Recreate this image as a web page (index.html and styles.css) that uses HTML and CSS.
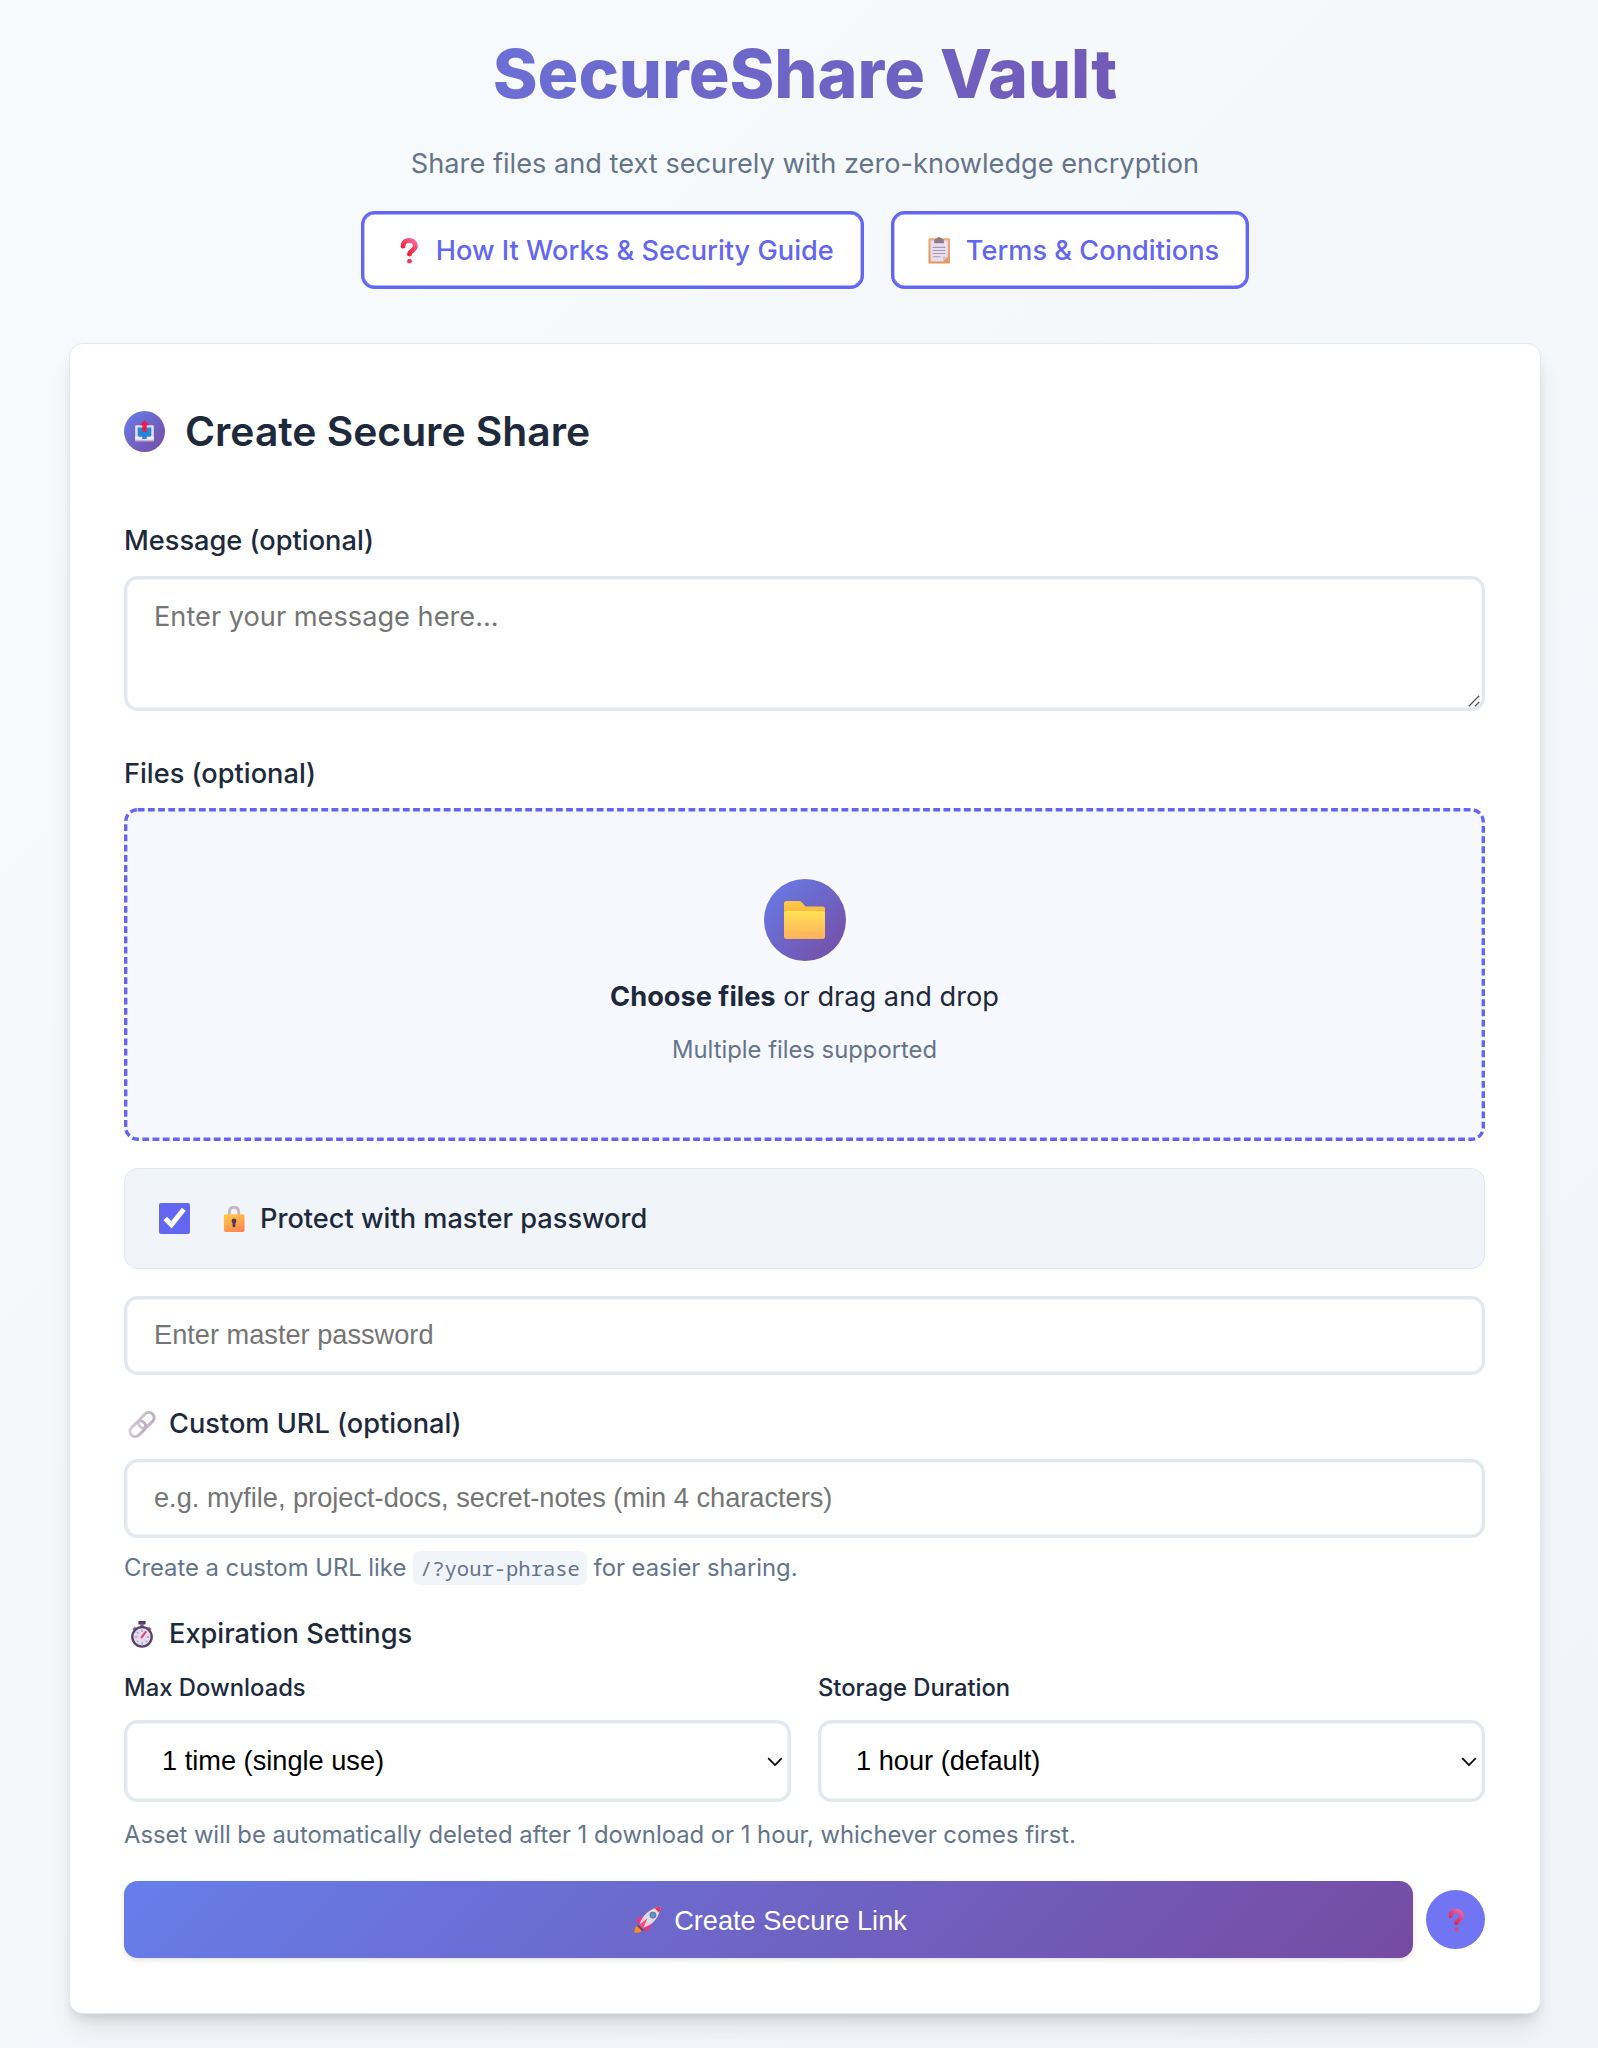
FILE: index.html
```html
<!DOCTYPE html>
<html lang="en">
<head>
<meta charset="utf-8">
<title>SecureShare Vault</title>
<link rel="stylesheet" href="styles.css">
</head>
<body>
<svg class="defs" aria-hidden="true">
  <defs>
    <linearGradient id="g-red" x1="1" y1="0" x2="0.3" y2="1"><stop offset="0" stop-color="#ff6aa0"/><stop offset=".5" stop-color="#f43d64"/><stop offset="1" stop-color="#ea1d36"/></linearGradient>
    <linearGradient id="g-folder" x1="0" y1="0" x2="0" y2="1"><stop offset="0" stop-color="#ffe152"/><stop offset="1" stop-color="#ffb05f"/></linearGradient>
    <linearGradient id="g-tab" x1="0" y1="0" x2="0" y2="1"><stop offset="0" stop-color="#ffcb4b"/><stop offset="1" stop-color="#f9a930"/></linearGradient>
    <linearGradient id="g-lock" x1="0.2" y1="0" x2="0.7" y2="1"><stop offset="0" stop-color="#ffc748"/><stop offset="1" stop-color="#ff8552"/></linearGradient>
    <linearGradient id="g-wood" x1="0" y1="0" x2="0" y2="1"><stop offset="0" stop-color="#f0aa70"/><stop offset="1" stop-color="#e29658"/></linearGradient>
    <linearGradient id="g-link" x1="0" y1="0" x2="1" y2="1"><stop offset="0" stop-color="#d8cedb"/><stop offset="1" stop-color="#b7a9bd"/></linearGradient>
  </defs>
  <symbol id="i-question" viewBox="0 0 32 32">
    <path d="M9 10.800C9.200 6.500 12 4 16.300 4s7.200 2.700 7.200 6.800c0 5-6.500 5-6.900 9.400" fill="none" stroke="url(#g-red)" stroke-width="5.800" stroke-linecap="round"/>
    <circle cx="16.600" cy="28.700" r="2.800" fill="#f43b55"/>
  </symbol>
  <symbol id="i-clipboard" viewBox="0 0 32 32">
    <rect x="3.500" y="1.500" width="25.500" height="30" rx="1.500" fill="url(#g-wood)"/>
    <path d="M6 4h20.500v19.300L20.800 29H6z" fill="#e7dff0"/>
    <path d="M20.800 29v-5.700h5.700z" fill="#cdbdd9"/>
    <path d="M10.300 5.500c0-2.700 1.400-3.700 3.300-3.700.3-2.200 4.700-2.200 5 0 1.900 0 3.300 1 3.300 3.700v1.800H10.300z" fill="#8b7a8c"/>
    <path d="M8.500 12.300h15M8.500 16h15M8.500 19.600h15M8.500 23.300h9" stroke="#a698b0" stroke-width="1.200"/>
  </symbol>
  <symbol id="i-outbox" viewBox="0 0 32 32">
    <path d="M3 9.500Q3 8 4.500 8h23Q29 8 29 9.500V30H3z" fill="#e5dcec"/>
    <path d="M3 25h26v5.500H3z" fill="#c5b2d2"/>
    <path d="M3 24h10v2.500h6V24h10v4H3z" fill="#f1e9f6"/>
    <path d="M6.500 11h19v11.500l-2 1.500H19v3h-6v-3H8.500l-2-1.500z" fill="#2488d8"/>
    <path d="M16 1l6.500 7H19v9.500h-6V8H9.500z" fill="#e61e50"/>
  </symbol>
  <symbol id="i-folder" viewBox="0 0 41 38">
    <path d="M0 2.500Q0 0 2.500 0H15q1.500 0 2.500 1l4 4.500H38.500Q41 5.500 41 8V20H0z" fill="url(#g-tab)"/>
    <path d="M0 12q0-2 2-2h37q2 0 2 2v23.500q0 2.500-2.500 2.500h-36Q0 38 0 35.500z" fill="url(#g-folder)"/>
  </symbol>
  <symbol id="i-lock" viewBox="0 0 32 32">
    <path d="M10.500 13V8.500q0-5.800 5.500-5.800T21.500 8.500V13" fill="none" stroke="#c5b6c4" stroke-width="3.400"/>
    <rect x="4" y="11" width="24.500" height="21" rx="2" fill="url(#g-lock)"/>
    <circle cx="16" cy="19" r="2.900" fill="#513b4e"/><rect x="14.300" y="19" width="3.400" height="7.500" rx="1.700" fill="#513b4e"/>
  </symbol>
  <symbol id="i-link" viewBox="0 0 32 32">
    <g fill="none" stroke="url(#g-link)" stroke-width="3.600">
      <rect x="10.500" y="4.800" width="21" height="12.400" rx="6.200" transform="rotate(-45 21 11)"/>
      <rect x=".5" y="14.800" width="21" height="12.400" rx="6.200" transform="rotate(-45 11 21)"/>
    </g>
  </symbol>
  <symbol id="i-timer" viewBox="0 0 32 32">
    <rect x="11.700" y="0" width="8.600" height="4" rx="1" fill="#533564"/><rect x="14" y="3" width="4" height="5" fill="#7b6687"/>
    <path d="M4.500 9.500l3-3 3 3-3 3zM27.500 9.500l-3-3-3 3 3 3z" fill="#8c7c98"/>
    <circle cx="16" cy="18.800" r="11.500" fill="#e5dced" stroke="#56406c" stroke-width="2.800"/>
    <path d="M16 10v3M16 25v3M7.500 19h3M21.500 19h3M10 13l1.700 1.700M22 25l-1.700-1.700M10 25l1.700-1.700" stroke="#ad9fbb" stroke-width="1.700"/>
    <path d="M15.500 19.500l5-6.500" stroke="#f33473" stroke-width="2.400" stroke-linecap="round"/>
  </symbol>
  <symbol id="i-rocket" viewBox="0 0 32 32">
    <path d="M12.500 11.500L5 14q-3 2-3.800 5l8 .5zM20.500 19.500L18 27q-2 3-5 4.200l-.8-8z" fill="#f4336f"/>
    <path d="M0 31.800V28q.2-4 4-4.700l4.700 4.900Q8 31.800 4 31.800z" fill="#f58a28"/>
    <path d="M6.200 21.500Q11.500 4.500 31.300.7 28 20.500 10.500 25.800z" fill="#e2d9e6"/>
    <path d="M24 2.800Q27.500 1.200 31.300.7q-.5 3.800-2 7.200z" fill="#f22f44"/>
    <path d="M3.500 23.700l12-9.200-6.200 14.300q-1.800-3.600-5.800-5.100z" fill="#fb4a85"/>
    <path d="M4 23l6 6" stroke="#5e4568" stroke-width="2.200"/>
    <circle cx="21.800" cy="10.700" r="3.300" fill="#3aa0ee" stroke="#7c7087" stroke-width="1.400"/>
  </symbol>
</svg>

<header class="header">
  <h1 class="title">SecureShare Vault</h1>
  <p class="subtitle">Share files and text securely with zero-knowledge encryption</p>
  <nav class="nav">
    <a class="nav-link"><svg class="emoji"><use href="#i-question"/></svg><span>How It Works &amp; Security Guide</span></a>
    <a class="nav-link"><svg class="emoji"><use href="#i-clipboard"/></svg><span>Terms &amp; Conditions</span></a>
  </nav>
</header>

<main class="card">
  <h2 class="card-title"><span class="badge"><svg class="badge-icon"><use href="#i-outbox"/></svg></span><span>Create Secure Share</span></h2>

  <label class="label" for="message">Message (optional)</label>
  <div class="message">
    <textarea class="field textarea" id="message" placeholder="Enter your message here..."></textarea>
    <svg class="grip" viewBox="0 0 12 12"><path d="M.8 11.200L11.200.8M7 11.200l4.200-4.200"/></svg>
  </div>

  <span class="label label-files">Files (optional)</span>
  <div class="dropzone">
    <svg class="drop-outline"><rect class="drop-dashes" rx="12"/></svg>
    <span class="drop-badge"><svg class="drop-icon"><use href="#i-folder"/></svg></span>
    <p class="drop-text"><strong>Choose files</strong> or drag and drop</p>
    <p class="drop-hint">Multiple files supported</p>
  </div>

  <label class="protect">
    <input class="check" type="checkbox" checked>
    <svg class="emoji"><use href="#i-lock"/></svg>
    <span>Protect with master password</span>
  </label>

  <input class="field" type="password" placeholder="Enter master password">

  <label class="label label-icon label-url" for="url"><svg class="emoji"><use href="#i-link"/></svg><span>Custom URL (optional)</span></label>
  <input class="field" id="url" type="text" placeholder="e.g. myfile, project-docs, secret-notes (min 4 characters)">
  <p class="hint">Create a custom URL like <code class="code">/?your-phrase</code> for easier sharing.</p>

  <div class="label label-icon label-expire"><svg class="emoji"><use href="#i-timer"/></svg><span>Expiration Settings</span></div>
  <div class="columns">
    <div class="column">
      <label class="small-label" for="downloads">Max Downloads</label>
      <div class="select">
        <select class="field select-field" id="downloads"><option>1 time (single use)</option></select>
        <svg class="chevron" viewBox="0 0 16 10"><path d="M1.200 1.200L8 8l6.800-6.800"/></svg>
      </div>
    </div>
    <div class="column">
      <label class="small-label" for="duration">Storage Duration</label>
      <div class="select">
        <select class="field select-field" id="duration"><option>1 hour (default)</option></select>
        <svg class="chevron" viewBox="0 0 16 10"><path d="M1.200 1.200L8 8l6.800-6.800"/></svg>
      </div>
    </div>
  </div>
  <p class="hint hint-expire">Asset will be automatically deleted after 1 download or 1 hour, whichever comes first.</p>

  <div class="actions">
    <button class="submit"><svg class="emoji"><use href="#i-rocket"/></svg><span class="submit-text">Create Secure Link</span></button>
    <button class="help" aria-label="Help"><svg class="help-icon"><use href="#i-question"/></svg></button>
  </div>
</main>
</body>
</html>
```

FILE: styles.css
```css
* { box-sizing: border-box; margin: 0; padding: 0; }

:root {
  --ink: #1e293b;
  --muted: #64748b;
  --line: #e2e8f0;
  --accent: #6366f1;
  --gradient: linear-gradient(135deg, #667eea 0%, #764ba2 100%);
}

body {
  min-height: 2048px;
  padding: 32px 57px 34px 69px;
  background: linear-gradient(135deg, #f8fafc 0%, #f1f5f9 100%);
  color: var(--ink);
  font: 400 27.2px/44px Inter, "Liberation Sans", sans-serif;
}

.defs { position: absolute; width: 0; height: 0; }
.emoji { flex: none; width: 36px; height: 27px; }

.header { display: flex; flex-direction: column; align-items: center; }
.title {
  align-self: stretch;
  background: var(--gradient);
  background-clip: text;
  -webkit-background-clip: text;
  color: transparent;
  font-size: 68px;
  font-weight: 800;
  line-height: 82px;
  letter-spacing: -0.02px;
  text-align: center;
}
.subtitle { margin-top: 28px; color: var(--muted); }
.nav { display: flex; gap: 27px; margin-top: 25px; }
.nav-link {
  display: flex;
  align-items: center;
  gap: 9px;
  height: 78px;
  padding: 1px 27px 0;
  border: 3px solid var(--accent);
  border-radius: 13.6px;
  background: #fff;
  box-shadow: inset 0 0 0 .4px var(--accent);
  color: var(--accent);
  font-weight: 500;
}

.card {
  margin-top: 54px;
  padding: 54px 55px 55px 54px;
  border: 1px solid var(--line);
  border-radius: 13.6px;
  background: #fff;
  box-shadow: 0 17px 25.500px -5px rgb(0 0 0 / 10%), 0 7px 10px -3px rgb(0 0 0 / 10%);
}
.card-title {
  display: flex;
  align-items: center;
  gap: 20px;
  height: 66px;
  font-size: 40.8px;
  font-weight: 600;
}
.badge {
  display: flex;
  align-items: center;
  justify-content: center;
  width: 41px;
  height: 41px;
  border-radius: 50%;
  background: var(--gradient);
}
.badge-icon { width: 23px; height: 24px; }

.label { display: block; margin-bottom: 13px; font-weight: 500; }
.card-title + .label { margin-top: 55px; }
.label-files { margin: 41px 0 12px; }
.label-icon { display: flex; align-items: center; gap: 9px; }
.label-url { margin: 27px 0 13px; }
.label-expire { margin: 25px 0 13px; }

.field {
  display: block;
  width: 100%;
  height: 79px;
  padding: 0 27px 2px;
  border: 3px solid var(--line);
  border-radius: 13.6px;
  background: #fff;
  box-shadow: inset 0 0 0 .4px var(--line);
  outline: 0;
  color: #000;
  font: 400 27.2px "Liberation Sans", Arial, sans-serif;
}
.field::placeholder { color: #757575; }
.message { position: relative; }
.textarea {
  height: 135px;
  padding: 16px 27px;
  font: inherit;
  resize: none;
}
.grip { position: absolute; right: 5px; bottom: 4px; width: 12px; height: 12px; fill: none; stroke: #555; stroke-width: 1.3; }

.dropzone {
  position: relative;
  display: flex;
  flex-direction: column;
  align-items: center;
  height: 333px;
  padding-top: 71px;
  border-radius: 13.6px;
  background: #f7f8fe;
}
.drop-outline { position: absolute; inset: 0; width: 100%; height: 100%; }
.drop-dashes {
  x: 1.7px;
  y: 1.7px;
  width: calc(100% - 3.4px);
  height: calc(100% - 3.4px);
  fill: none;
  stroke: var(--accent);
  stroke-width: 3.4px;
  stroke-dasharray: 6.8 3.4;
}
.drop-badge {
  display: flex;
  align-items: center;
  justify-content: center;
  width: 82px;
  height: 82px;
  border-radius: 50%;
  background: var(--gradient);
}
.drop-icon { width: 41px; height: 38px; }
.drop-text { margin-top: 14px; }
.drop-text strong { font-weight: 700; }
.drop-hint { margin-top: 12px; color: var(--muted); font-size: 23.8px; line-height: 38px; }

.protect {
  display: flex;
  align-items: center;
  height: 101px;
  margin: 27px 0;
  padding: 0 34px;
  border: 1px solid var(--line);
  border-radius: 13.6px;
  background: #f1f5f9;
  font-weight: 500;
}
.check { width: 31px; height: 31px; margin-right: 26px; accent-color: var(--accent); }
.protect .emoji { margin-right: 8px; }

.hint { margin-top: 11px; color: var(--muted); font-size: 23.8px; line-height: 38px; }
.code {
  padding: 3px 7px;
  border-radius: 7px;
  background: #f1f5f9;
  font-family: "Noto Sans Mono", "DejaVu Sans Mono", monospace;
  font-size: 20.5px;
}

.columns { display: grid; grid-template-columns: 1fr 1fr; gap: 27px; }
.small-label { display: block; margin-bottom: 13px; font-size: 23.8px; font-weight: 500; line-height: 38px; }
.select { position: relative; }
.select-field { height: 82px; padding: 0 35px 1px; appearance: none; }
.chevron { position: absolute; top: 37px; right: 8px; width: 16px; height: 10px; fill: none; stroke: #000; stroke-width: 1.7; }
.hint-expire { margin-top: 14px; }

.actions { display: flex; align-items: center; gap: 13px; margin-top: 27px; }
.submit {
  display: flex;
  flex: 1;
  align-items: center;
  justify-content: center;
  gap: 8px;
  height: 77px;
  border: 0;
  border-radius: 13.6px;
  background: var(--gradient);
  box-shadow: 0 2px 5px rgb(0 0 0 / 12%);
  color: #fff;
  font: 400 27.2px "Liberation Sans", Arial, sans-serif;
}
.submit-text { padding-top: 3px; }
.help {
  display: flex;
  align-items: center;
  justify-content: center;
  width: 59px;
  height: 59px;
  border: 0;
  border-radius: 50%;
  background: #7275f3;
}
.help-icon { width: 24px; height: 24px; opacity: .85; }
```
